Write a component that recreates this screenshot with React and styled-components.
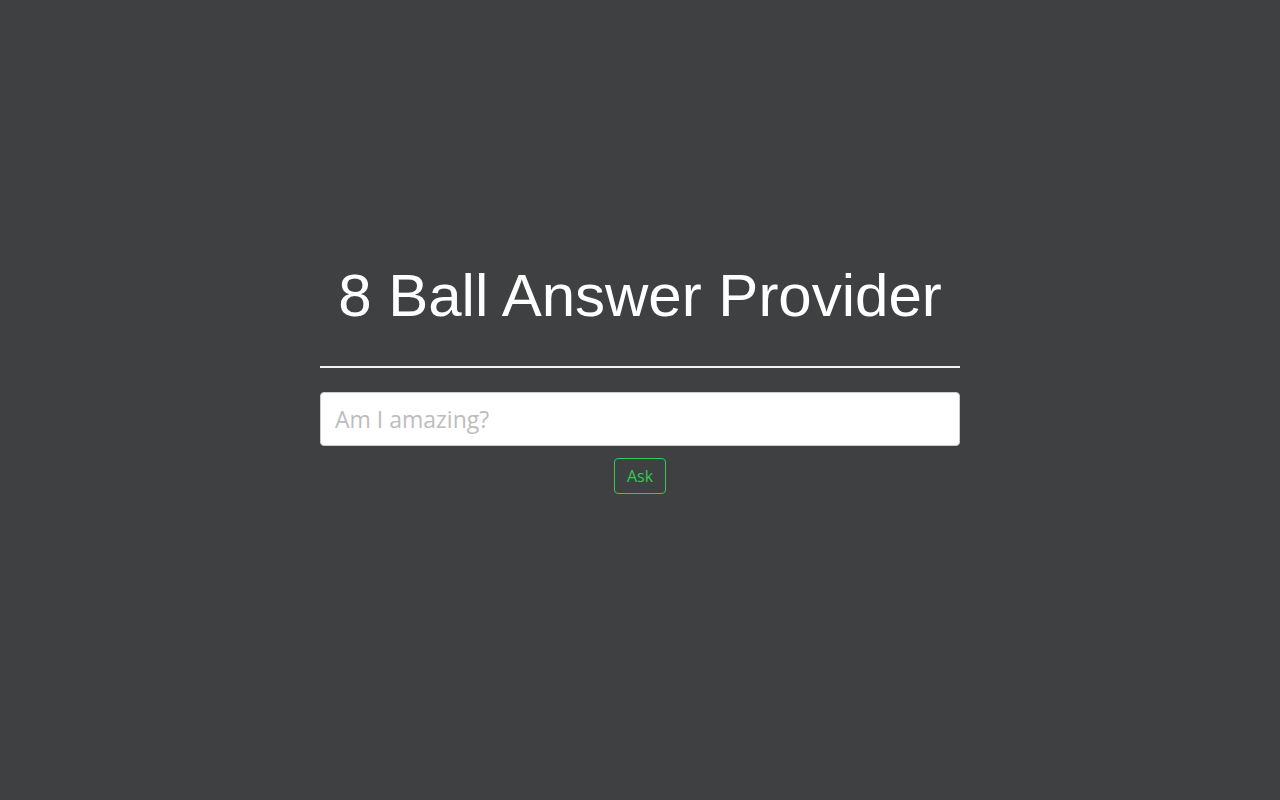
import styled, { createGlobalStyle } from "styled-components"

const GlobalStyle = createGlobalStyle`
  html, body {
    margin: 0;
    padding: 0;
    background: #3f4042;
  }
`

function App() {
  return (
    <>
      <GlobalStyle />
      <StPage>
        <StPanel>
          <StTitle>8 Ball Answer Provider</StTitle>
          <StRule />
          <StInput placeholder="Am I amazing?" />
          <StAsk>Ask</StAsk>
        </StPanel>
      </StPage>
    </>
  )
}

export default App

const StPage = styled.div`
  width: 100%;
  height: 800px;
  background: #3f4042;
  display: flex;
  justify-content: center;
`

const StPanel = styled.div`
  width: 640px;
  padding-top: 258px;
  display: flex;
  flex-direction: column;
  align-items: center;
`

const StTitle = styled.h1`
  margin: 0;
  font-family: "Liberation Sans", Arial, sans-serif;
  font-weight: 400;
  font-size: 60px;
  line-height: 76px;
  color: #fff;
  text-align: center;
  white-space: nowrap;
`

const StRule = styled.div`
  width: 100%;
  height: 2px;
  background: #f2f2f2;
  margin-top: 32px;
`

const StInput = styled.input`
  box-sizing: border-box;
  width: 100%;
  height: 54px;
  margin-top: 24px;
  padding: 0 14px;
  border: 1px solid #ccc;
  border-radius: 4px;
  background: #fff;
  font-family: "Open Sans", sans-serif;
  font-size: 23px;
  color: #333;
  outline: none;

  &::placeholder {
    color: #bdbdbd;
  }
`

const StAsk = styled.button`
  margin-top: 12px;
  width: 52px;
  height: 36px;
  padding: 0;
  border: 1px solid #2ecc50;
  border-radius: 4px;
  background: transparent;
  color: #2ecc50;
  font-family: "Open Sans", sans-serif;
  font-size: 16px;
  cursor: pointer;
`
